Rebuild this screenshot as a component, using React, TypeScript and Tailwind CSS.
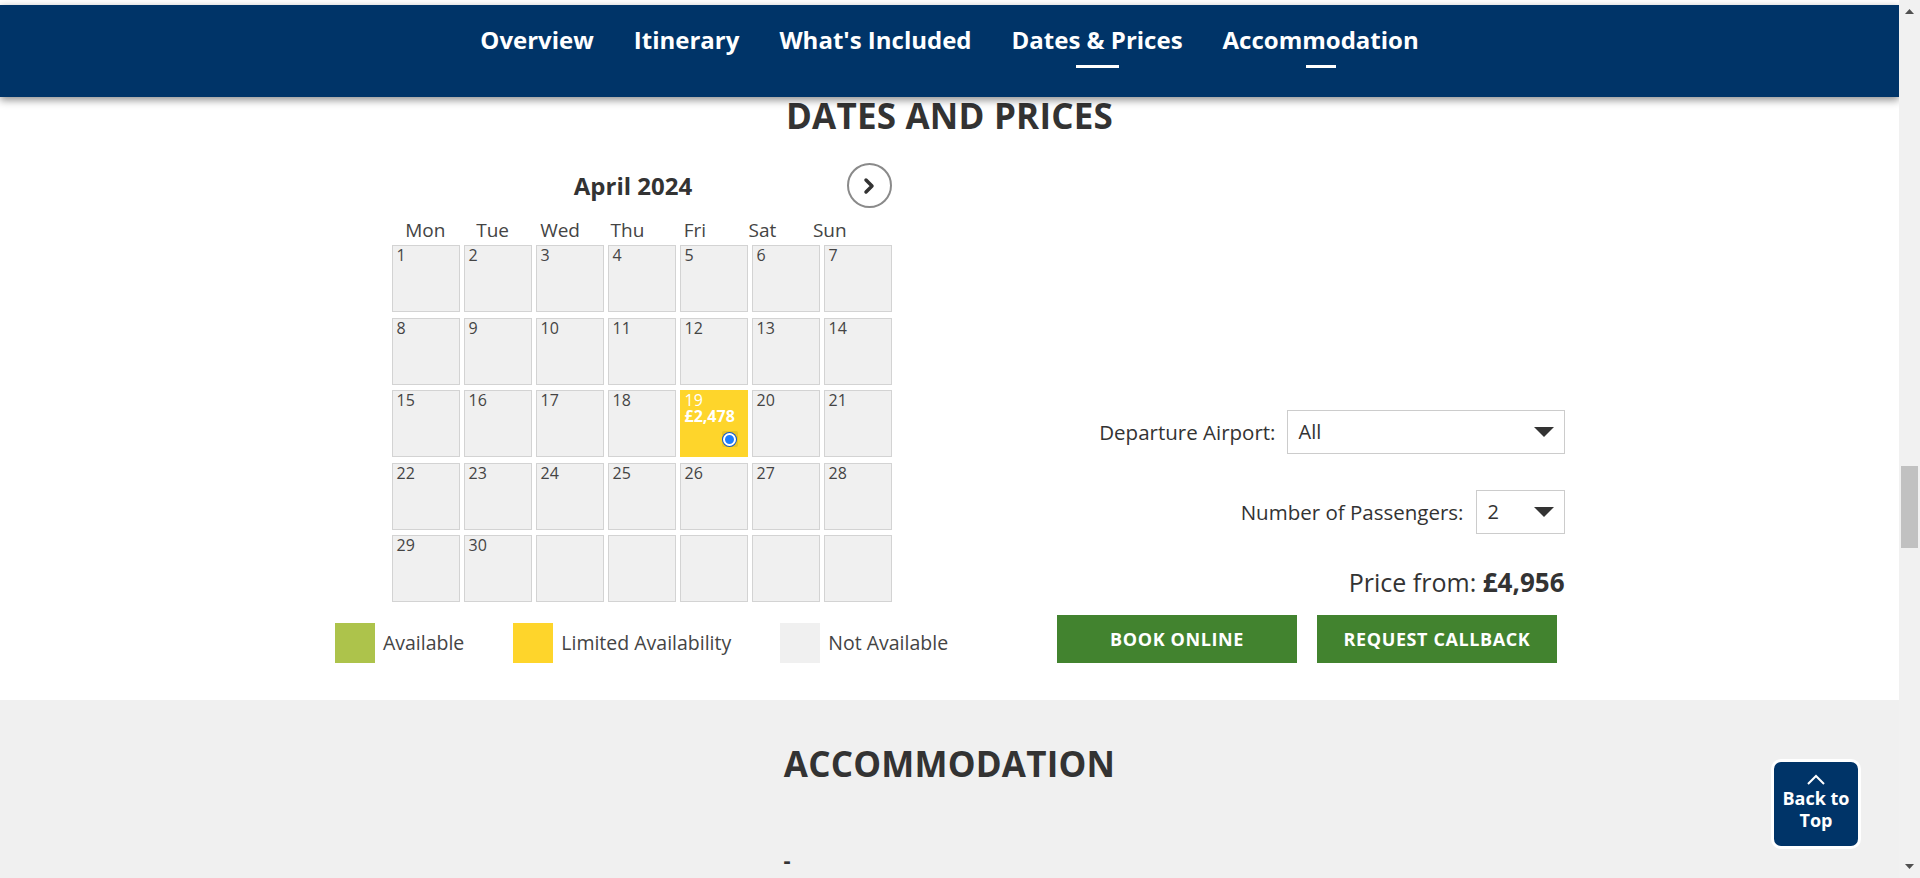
import React from 'react';

const NAV_ITEMS = [
  { label: 'Overview', bar: '' },
  { label: 'Itinerary', bar: '' },
  { label: "What's Included", bar: '' },
  { label: 'Dates & Prices', bar: 'w-[43px]' },
  { label: 'Accommodation', bar: 'w-[30px]' },
];

const DAYS = ['Mon', 'Tue', 'Wed', 'Thu', 'Fri', 'Sat', 'Sun'];

// April 2024 starts on a Monday, 5 rows of 7
const CELLS: (number | null)[] = Array.from({ length: 35 }, (_, i) => (i < 30 ? i + 1 : null));

const LEGEND = [
  { label: 'Available', color: 'bg-[#adc34b]' },
  { label: 'Limited Availability', color: 'bg-[#fed52b]' },
  { label: 'Not Available', color: 'bg-[#f0f0f0]' },
];

const Caret = () => (
  <svg width="20" height="10" viewBox="0 0 20 10">
    <polygon points="0,0 20,0 10,10" fill="#333" />
  </svg>
);

const Select = ({ value, width }: { value: string; width: string }) => (
  <div className={`flex h-[44px] items-center justify-between border border-[#cccccc] bg-white pl-[11px] pr-[10px] ${width}`}>
    <span className="text-[20px] leading-none text-[#333]">{value}</span>
    <Caret />
  </div>
);

const DayCell = ({ day }: { day: number | null }) => {
  if (day === 19) {
    return (
      <div className="flex h-[67px] flex-col border border-[#fed52b] bg-[#fed52b] pl-[4px] pt-[1px] text-[16px] leading-[16px] text-white">
        <span>19</span>
        <span className="font-bold">£2,478</span>
        <div className="mt-[7px] flex justify-end pr-[9px]">
          <span className="flex h-[16px] w-[16px] items-center justify-center rounded-[2px] bg-[#e9c423]">
            <span className="flex h-[15px] w-[15px] items-center justify-center rounded-full bg-[#0b57d0] p-[1px]">
              <span className="h-full w-full rounded-full border-2 border-white bg-[#1a7cff]"></span>
            </span>
          </span>
        </div>
      </div>
    );
  }
  return (
    <div className="h-[67px] border border-[#d3d3d3] bg-[#f0f0f0] pl-[4px] pt-[1px] text-[16px] leading-[16px] text-[#444]">
      {day ?? ''}
    </div>
  );
};

export default function App() {
  return (
    <div className="flex h-[878px] w-full overflow-hidden bg-white font-['Open_Sans',sans-serif] text-[#333]">
      <div className="relative flex-1 overflow-hidden">
        {/* sticky section nav */}
        <nav className="absolute left-0 right-0 top-[5px] z-10 h-[92px] bg-[#003468] shadow-[0_3px_8px_rgba(0,0,0,0.45)]">
          <ul className="flex justify-center gap-[40px] pt-[18px]">
            {NAV_ITEMS.map(item => (
              <li key={item.label} className="flex flex-col items-center">
                <span className="text-[24px] font-bold leading-[33px] text-white">{item.label}</span>
                <span className={`mt-[9px] h-[3px] bg-white ${item.bar || 'w-0'}`}></span>
              </li>
            ))}
          </ul>
        </nav>

        {/* Dates and prices */}
        <section className="bg-white pb-[37px] pt-[92px]">
          <h2 className="text-center text-[35px] font-bold leading-[48px] tracking-[0.2px] text-[#333]">DATES AND PRICES</h2>

          <div className="mx-auto mt-[23px] flex w-[1230px] items-end">
            {/* calendar */}
            <div className="flex w-[614px] shrink-0 flex-col items-center">
              <div className="w-[500px]">
                <div className="flex h-[45px] items-center">
                  <h3 className="flex-1 pl-[28px] text-center text-[24px] font-bold text-[#333]">April 2024</h3>
                  <button className="flex h-[45px] w-[45px] items-center justify-center rounded-full border-2 border-[#8a8a8a] bg-white">
                    <svg width="14" height="18" viewBox="0 0 14 18">
                      <polyline points="4,3 10,9 4,15" fill="none" stroke="#333" strokeWidth="3.5" strokeLinecap="round" strokeLinejoin="round" />
                    </svg>
                  </button>
                </div>
                <div className="mt-[9px] grid w-[472px] grid-cols-7 text-center text-[19px] leading-[26px] text-[#444]">
                  {DAYS.map(d => (
                    <span key={d}>{d}</span>
                  ))}
                </div>
                <div className="mt-[2px] grid grid-cols-7 gap-x-[4px] gap-y-[5.5px]">
                  {CELLS.map((d, i) => (
                    <DayCell key={i} day={d} />
                  ))}
                </div>
              </div>

              <div className="mt-[21px] flex items-center justify-center gap-[49px] whitespace-nowrap">
                {LEGEND.map(l => (
                  <div key={l.label} className="flex shrink-0 items-center gap-[8px]">
                    <span className={`h-[40px] w-[40px] shrink-0 ${l.color}`}></span>
                    <span className="text-[19.5px] leading-[26px] text-[#444]">{l.label}</span>
                  </div>
                ))}
              </div>
            </div>

            {/* booking options */}
            <div className="ml-auto w-[515px] shrink-0">
              <div className="flex items-center justify-end gap-[11px]">
                <label className="text-[20.5px] text-[#333]">Departure Airport:</label>
                <Select value="All" width="w-[278px]" />
              </div>
              <div className="mt-[36px] flex items-center justify-end gap-[12px]">
                <label className="text-[20.5px] text-[#333]">Number of Passengers:</label>
                <Select value="2" width="w-[89px]" />
              </div>
              <p className="mt-[30px] text-right text-[25px] leading-[36px] text-[#333]">
                Price from: <span className="text-[26px] font-bold">£4,956</span>
              </p>
              <div className="mt-[15px] flex justify-center gap-[20px]">
                <button className="h-[48px] w-[240px] bg-[#42832f] text-[18px] font-bold tracking-[0.6px] text-white">BOOK ONLINE</button>
                <button className="h-[48px] w-[240px] bg-[#42832f] text-[18px] font-bold tracking-[0.6px] text-white">REQUEST CALLBACK</button>
              </div>
            </div>
          </div>
        </section>

        {/* Accommodation */}
        <section className="h-[300px] bg-[#f0f0f0] pt-[40px]">
          <h2 className="text-center text-[35px] font-bold leading-[48px] tracking-[0.2px] text-[#333]">ACCOMMODATION</h2>
          <div className="mx-auto mt-[56px] w-[332px] text-[22px] font-bold leading-[30px] text-[#333]">-</div>
        </section>

        {/* back to top */}
        <button className="absolute bottom-[29px] right-[38px] z-20 flex h-[90px] w-[90px] flex-col items-center justify-center rounded-[10px] border-[3px] border-white bg-[#003468] pb-[4px] text-white">
          <svg width="20" height="11" viewBox="0 0 20 11">
            <polyline points="2,10 10,2 18,10" fill="none" stroke="white" strokeWidth="2" />
          </svg>
          <span className="mt-[2px] text-[18px] font-bold leading-[22px]">Back to</span>
          <span className="text-[18px] font-bold leading-[22px]">Top</span>
        </button>
      </div>

      {/* scrollbar */}
      <div className="flex w-[21px] flex-col items-center bg-[#f1f1f1]">
        <svg className="mt-[9px]" width="9" height="5" viewBox="0 0 9 5">
          <polygon points="0,5 9,5 4.5,0" fill="#505050" />
        </svg>
        <div className="mt-[452px] h-[82px] w-[17px] bg-[#c1c1c1]"></div>
        <div className="flex-1"></div>
        <svg className="mb-[9px]" width="9" height="5" viewBox="0 0 9 5">
          <polygon points="0,0 9,0 4.5,5" fill="#505050" />
        </svg>
      </div>
    </div>
  );
}
